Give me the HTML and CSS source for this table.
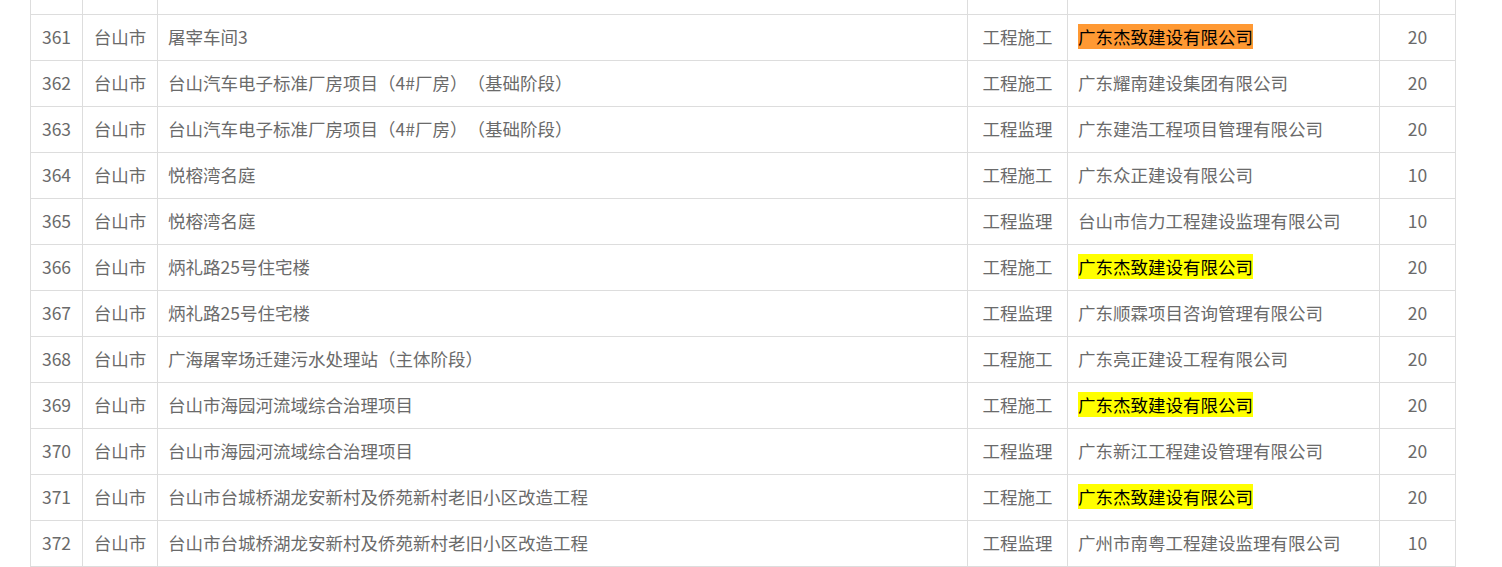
FILE: index.html
```html
<!DOCTYPE html>
<html lang="zh-CN">
<head>
<meta charset="utf-8">
<title>表格</title>
<link rel="stylesheet" href="styles.css">
</head>
<body>
<div class="wrap">
<table class="grid">
<colgroup>
<col class="c-no"><col class="c-city"><col class="c-proj"><col class="c-type"><col class="c-co"><col class="c-score">
</colgroup>
<tbody>
<tr><td class="ctr">&nbsp;</td><td class="ctr"></td><td></td><td class="ctr"></td><td></td><td class="ctr"></td></tr>
<tr><td class="ctr">361</td><td class="ctr">台山市</td><td>屠宰车间3</td><td class="ctr">工程施工</td><td><span class="hl-orange">广东杰致建设有限公司</span></td><td class="ctr">20</td></tr>
<tr><td class="ctr">362</td><td class="ctr">台山市</td><td>台山汽车电子标准厂房项目（4#厂房）（基础阶段）</td><td class="ctr">工程施工</td><td>广东耀南建设集团有限公司</td><td class="ctr">20</td></tr>
<tr><td class="ctr">363</td><td class="ctr">台山市</td><td>台山汽车电子标准厂房项目（4#厂房）（基础阶段）</td><td class="ctr">工程监理</td><td>广东建浩工程项目管理有限公司</td><td class="ctr">20</td></tr>
<tr><td class="ctr">364</td><td class="ctr">台山市</td><td>悦榕湾名庭</td><td class="ctr">工程施工</td><td>广东众正建设有限公司</td><td class="ctr">10</td></tr>
<tr><td class="ctr">365</td><td class="ctr">台山市</td><td>悦榕湾名庭</td><td class="ctr">工程监理</td><td>台山市信力工程建设监理有限公司</td><td class="ctr">10</td></tr>
<tr><td class="ctr">366</td><td class="ctr">台山市</td><td>炳礼路25号住宅楼</td><td class="ctr">工程施工</td><td><span class="hl-yellow">广东杰致建设有限公司</span></td><td class="ctr">20</td></tr>
<tr><td class="ctr">367</td><td class="ctr">台山市</td><td>炳礼路25号住宅楼</td><td class="ctr">工程监理</td><td>广东顺霖项目咨询管理有限公司</td><td class="ctr">20</td></tr>
<tr><td class="ctr">368</td><td class="ctr">台山市</td><td>广海屠宰场迁建污水处理站（主体阶段）</td><td class="ctr">工程施工</td><td>广东亮正建设工程有限公司</td><td class="ctr">20</td></tr>
<tr><td class="ctr">369</td><td class="ctr">台山市</td><td>台山市海园河流域综合治理项目</td><td class="ctr">工程施工</td><td><span class="hl-yellow">广东杰致建设有限公司</span></td><td class="ctr">20</td></tr>
<tr><td class="ctr">370</td><td class="ctr">台山市</td><td>台山市海园河流域综合治理项目</td><td class="ctr">工程监理</td><td>广东新江工程建设管理有限公司</td><td class="ctr">20</td></tr>
<tr><td class="ctr">371</td><td class="ctr">台山市</td><td>台山市台城桥湖龙安新村及侨苑新村老旧小区改造工程</td><td class="ctr">工程施工</td><td><span class="hl-yellow">广东杰致建设有限公司</span></td><td class="ctr">20</td></tr>
<tr><td class="ctr">372</td><td class="ctr">台山市</td><td>台山市台城桥湖龙安新村及侨苑新村老旧小区改造工程</td><td class="ctr">工程监理</td><td>广州市南粤工程建设监理有限公司</td><td class="ctr">10</td></tr>
</tbody>
</table>
</div>
</body>
</html>
```

FILE: styles.css
```css
html, body {
  margin: 0;
  padding: 0;
  background: #fff;
}
.wrap {
  padding-left: 30px;
  height: 567px;
  overflow: hidden;
}
.grid {
  margin-top: -32px;
  border-collapse: collapse;
  table-layout: fixed;
  width: 1425px;
  font-family: "Noto Sans CJK SC", "Microsoft YaHei", sans-serif;
  font-size: 17.5px;
  color: #6a6a6a;
  text-spacing-trim: space-all;
}
.c-no { width: 52px; }
.c-city { width: 75px; }
.c-proj { width: 810px; }
.c-type { width: 100px; }
.c-co { width: 312px; }
.c-score { width: 76px; }
.grid td {
  border: 1px solid #ddd;
  height: 46px;
  padding: 0 10px 2px;
  box-sizing: border-box;
  white-space: nowrap;
  overflow: hidden;
  vertical-align: middle;
  line-height: 24px;
}
.grid td.ctr {
  text-align: center;
  padding: 0 0 2px;
}
.hl-orange {
  background: #ff9933;
  color: #000;
}
.hl-yellow {
  background: #ffff00;
  color: #000;
}
```
